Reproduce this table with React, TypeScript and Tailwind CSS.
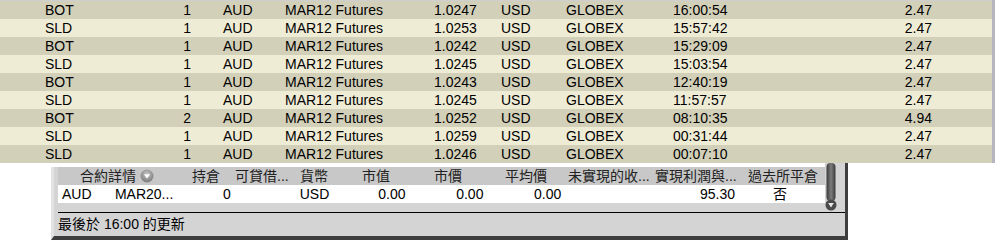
import React from "react";

const rows = [
  ["BOT", "1", "1.0247", "16:00:54", "2.47"],
  ["SLD", "1", "1.0253", "15:57:42", "2.47"],
  ["BOT", "1", "1.0242", "15:29:09", "2.47"],
  ["SLD", "1", "1.0245", "15:03:54", "2.47"],
  ["BOT", "1", "1.0243", "12:40:19", "2.47"],
  ["SLD", "1", "1.0245", "11:57:57", "2.47"],
  ["BOT", "2", "1.0252", "08:10:35", "4.94"],
  ["SLD", "1", "1.0259", "00:31:44", "2.47"],
  ["SLD", "1", "1.0246", "00:07:10", "2.47"],
];

const font = { fontFamily: '"Liberation Sans", Arial, "Noto Sans CJK TC", sans-serif' };

function CircleArrow() {
  return (
    <svg width="14" height="14" viewBox="0 0 14 14">
      <defs>
        <radialGradient id="ca" cx="50%" cy="35%" r="65%">
          <stop offset="0%" stopColor="#c4c4c4" />
          <stop offset="100%" stopColor="#7a7a7a" />
        </radialGradient>
      </defs>
      <circle cx="7" cy="7" r="6.5" fill="url(#ca)" />
      <path d="M3.8 5.2 L10.2 5.2 L7 9.4 Z" fill="#ffffff" />
    </svg>
  );
}

function ScrollThumb() {
  return (
    <svg width="12" height="50" viewBox="0 0 12 50">
      <defs>
        <linearGradient id="sb" x1="0" x2="1" y1="0" y2="0">
          <stop offset="0%" stopColor="#3a3a3a" />
          <stop offset="50%" stopColor="#7c7c7c" />
          <stop offset="100%" stopColor="#3a3a3a" />
        </linearGradient>
      </defs>
      <rect x="1.5" y="0" width="9" height="38" rx="4" fill="url(#sb)" />
      <circle cx="6" cy="42" r="5.5" fill="#4a4a4a" />
      <path d="M3.2 40 L8.8 40 L6 44.4 Z" fill="#e8e8e8" />
    </svg>
  );
}

export default function App() {
  return (
    <div className="w-[999px] h-[240px] bg-white overflow-hidden text-[14px] text-black" style={font}>
      <div className="flex">
        <div className="w-[992px] border-t border-[#cfcfcf]">
          {rows.map((r, i) => (
            <div
              key={i}
              className={`flex h-[18px] leading-[18px] ${i % 2 === 0 ? "bg-[#d3d0b9]" : "bg-[#efecd6]"}`}
            >
              <span className="w-[145px] pl-[45px]">{r[0]}</span>
              <span className="w-[46px] text-right">{r[1]}</span>
              <span className="w-[94px] pl-[32px]">AUD</span>
              <span className="w-[149px]">MAR12 Futures</span>
              <span className="w-[67px]">{r[2]}</span>
              <span className="w-[65px]">USD</span>
              <span className="w-[107px]">GLOBEX</span>
              <span className="w-[200px]">{r[3]}</span>
              <span className="w-[59px] text-right">{r[4]}</span>
            </div>
          ))}
        </div>
        <div className="w-[3px] h-[163px] bg-[#b6b6be]" />
      </div>

      <div className="ml-[51px] w-[797px] h-[77px] flex border-r-[3px] border-b-[4px] border-[#3e3e3e] bg-[#d4d4d4] border-l-[3px] border-l-[#e2e2e2]">
        <div className="flex flex-col w-[771px]">
          <div className="h-[4px] bg-white -ml-[3px] w-[774px]" />
          <div className="ml-[4px] flex h-[18px] leading-[18px] bg-[#c8c8c8] text-[#222]">
            <span className="w-[134px] pl-[22px] flex items-center gap-[4px]">
              <span>合約詳情</span>
              <CircleArrow />
            </span>
            <span className="w-[43px]">持倉</span>
            <span className="w-[65px]">可貸借...</span>
            <span className="w-[62px]">貨幣</span>
            <span className="w-[72px]">市值</span>
            <span className="w-[71px]">市價</span>
            <span className="w-[63px]">平均價</span>
            <span className="w-[87px]">未實現的收...</span>
            <span className="w-[93px]">實現利潤與...</span>
            <span>過去所平倉</span>
          </div>
          <div className="ml-[4px] flex h-[18px] leading-[18px] bg-white">
            <span className="w-[57px] pl-[4px]">AUD</span>
            <span className="w-[90px]">MAR20...</span>
            <span className="w-[26px] text-right">0</span>
            <span className="w-[69px]" />
            <span className="w-[50px]">USD</span>
            <span className="w-[56px] text-right">0.00</span>
            <span className="w-[78px] text-right">0.00</span>
            <span className="w-[78px] text-right">0.00</span>
            <span className="w-[174px] text-right">95.30</span>
            <span className="w-[90px] text-center">否</span>
          </div>
          <div className="h-[9px]" />
          <div className="ml-[4px] h-px bg-black w-[787px]" />
          <div className="ml-[4px] h-[22px] leading-[22px]">最後於 16:00 的更新</div>
        </div>
        <div className="flex-1 flex justify-start pt-0">
          <ScrollThumb />
        </div>
      </div>
    </div>
  );
}
